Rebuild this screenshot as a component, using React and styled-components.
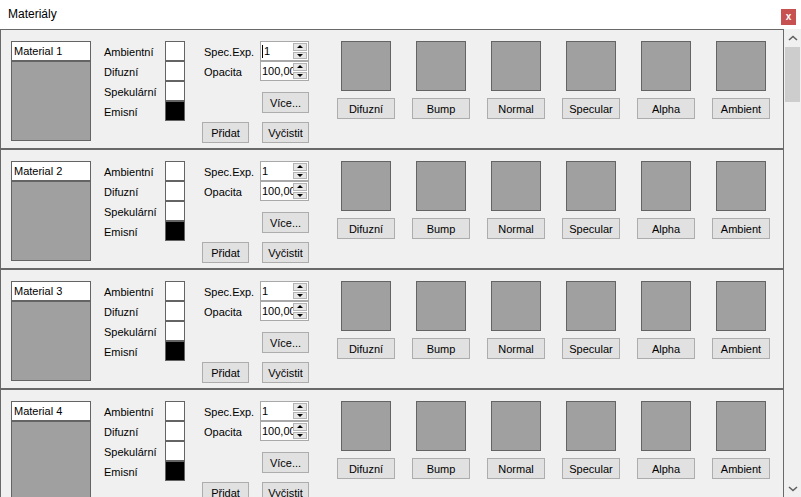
import React from "react";
import styled, { createGlobalStyle } from "styled-components";

const Global = createGlobalStyle`
  html, body { margin: 0; padding: 0; overflow: hidden; background: #ffffff; }
  body { font-family: "Liberation Sans", Arial, sans-serif; color: #000; }
  * { box-sizing: border-box; }
`;

const Window = styled.div`
  display: flex;
  flex-direction: column;
  height: 100vh;
  width: 801px;
`;

const TitleBar = styled.div`
  height: 29px;
  flex: none;
  display: flex;
  justify-content: space-between;
  align-items: flex-start;
  background: #ffffff;
`;

const Title = styled.span`
  font-size: 12px;
  line-height: 29px;
  padding-left: 8px;
`;

const CloseButton = styled.div`
  margin-top: 9px;
  margin-right: 5px;
  width: 15px;
  height: 16px;
  background: #c75050;
  color: #fff;
  font-size: 10px;
  font-weight: bold;
  line-height: 15px;
  text-align: center;
`;

const Body = styled.div`
  flex: 1;
  min-height: 0;
  display: flex;
  background: #f0f0f0;
`;

const List = styled.div`
  width: 784px;
  overflow: hidden;
`;

const Panel = styled.div`
  height: 120px;
  border: 1px solid #696969;
  padding: 11px 0 0 10px;
  display: flex;
  align-items: flex-start;
  background: #f0f0f0;
`;

const NameColumn = styled.div`
  width: 80px;
  display: flex;
  flex-direction: column;
`;

const NameBox = styled.div`
  height: 20px;
  border: 1px solid #646464;
  background: #fff;
  font-size: 11px;
  line-height: 18px;
  padding-left: 2px;
`;

const Preview = styled.div`
  height: 80px;
  border: 1px solid #646464;
  background: #a0a0a0;
`;

const LabelColumn = styled.div`
  margin-left: 13px;
  width: 61px;
  display: flex;
  flex-direction: column;
`;

const Label = styled.div`
  height: 20px;
  line-height: 22px;
  font-size: 11px;
  white-space: nowrap;
`;

const SwatchColumn = styled.div`
  width: 20px;
  display: flex;
  flex-direction: column;
`;

const Swatch = styled.div`
  height: 20px;
  border: 1px solid #646464;
  background: ${(p) => p.$color};
`;

const ControlColumn = styled.div`
  width: ${(p) => p.$width}px;
  margin-left: ${(p) => p.$offset}px;
  display: flex;
  flex-direction: column;
`;

const FieldLabel = styled(Label)`
  padding-left: 2px;
`;

const Button = styled.div`
  width: 47px;
  height: 21px;
  margin-top: ${(p) => p.$top || 0}px;
  margin-left: ${(p) => p.$left || 0}px;
  background: #e1e1e1;
  border: 1px solid #adadad;
  font-size: 11px;
  line-height: 19px;
  padding-top: 1px;
  text-align: center;
  white-space: nowrap;
`;

const Spinner = styled.div`
  width: 49px;
  height: 20px;
  border: 1px solid #a9a9a9;
  background: #fff;
  display: flex;
`;

const SpinText = styled.div`
  flex: 1;
  overflow: hidden;
  white-space: nowrap;
  font-size: 11px;
  line-height: 18px;
  padding-left: 1px;
  display: flex;
  align-items: center;
`;

const Caret = styled.span`
  display: inline-block;
  width: 1px;
  height: 13px;
  background: #000;
  margin-right: 1px;
`;

const SpinButtons = styled.div`
  width: 14px;
  margin: 1px 1px 1px 0;
  display: flex;
  flex-direction: column;
  gap: 1px;
`;

const SpinButton = styled.div`
  flex: 1;
  background: #e6e6e6;
  border: 1px solid #b4b4b4;
  display: flex;
  align-items: center;
  justify-content: center;
`;

const Arrow = styled.div`
  width: 0;
  height: 0;
  border-left: 3px solid transparent;
  border-right: 3px solid transparent;
  ${(p) =>
    p.$up
      ? "border-bottom: 3px solid #000;"
      : "border-top: 3px solid #000;"}
`;

const Textures = styled.div`
  margin-left: 27px;
  display: flex;
  gap: 17px;
`;

const TextureSlot = styled.div`
  width: 58px;
  display: flex;
  flex-direction: column;
  align-items: center;
`;

const TextureSquare = styled.div`
  width: 50px;
  height: 50px;
  border: 1px solid #646464;
  background: #a0a0a0;
`;

const TextureButton = styled(Button)`
  width: 58px;
  margin-top: 7px;
`;

const Scrollbar = styled.div`
  width: 17px;
  display: flex;
  flex-direction: column;
  background: #f0f0f0;
`;

const ScrollArrow = styled.div`
  height: 17px;
  flex: none;
  display: flex;
  align-items: center;
  justify-content: center;
`;

const Track = styled.div`
  flex: 1;
  padding: 1px 1px 0 1px;
`;

const Thumb = styled.div`
  height: 55px;
  background: #cdcdcd;
`;

function Chevron({ up }) {
  return (
    <svg width="10" height="6" viewBox="0 0 10 6">
      <polyline
        points={up ? "1,5 5,1.5 9,5" : "1,1 5,4.5 9,1"}
        fill="none"
        stroke="#606060"
        strokeWidth="1.6"
      />
    </svg>
  );
}

function NumberField({ value, focused }) {
  return (
    <Spinner>
      <SpinText>
        {focused && <Caret />}
        {value}
      </SpinText>
      <SpinButtons>
        <SpinButton>
          <Arrow $up />
        </SpinButton>
        <SpinButton>
          <Arrow />
        </SpinButton>
      </SpinButtons>
    </Spinner>
  );
}

const colorRows = [
  { label: "Ambientní", color: "#ffffff" },
  { label: "Difuzní", color: "#ffffff" },
  { label: "Spekulární", color: "#ffffff" },
  { label: "Emisní", color: "#000000" },
];

const textures = ["Difuzní", "Bump", "Normal", "Specular", "Alpha", "Ambient"];

function MaterialPanel({ index }) {
  return (
    <Panel>
      <NameColumn>
        <NameBox>Material {index}</NameBox>
        <Preview />
      </NameColumn>
      <LabelColumn>
        {colorRows.map((r) => (
          <Label key={r.label}>{r.label}</Label>
        ))}
      </LabelColumn>
      <SwatchColumn>
        {colorRows.map((r) => (
          <Swatch key={r.label} $color={r.color} />
        ))}
      </SwatchColumn>
      <ControlColumn $width={58} $offset={17}>
        <FieldLabel>Spec.Exp.</FieldLabel>
        <FieldLabel>Opacita</FieldLabel>
        <Button $top={41}>Přidat</Button>
      </ControlColumn>
      <ControlColumn $width={50} $offset={0}>
        <NumberField value="1" focused={index === 1} />
        <NumberField value="100,00" />
        <Button $top={11} $left={2}>Více...</Button>
        <Button $top={9} $left={2}>Vyčistit</Button>
      </ControlColumn>
      <Textures>
        {textures.map((t) => (
          <TextureSlot key={t}>
            <TextureSquare />
            <TextureButton>{t}</TextureButton>
          </TextureSlot>
        ))}
      </Textures>
    </Panel>
  );
}

export default function App() {
  return (
    <Window>
      <Global />
      <TitleBar>
        <Title>Materiály</Title>
        <CloseButton>x</CloseButton>
      </TitleBar>
      <Body>
        <List>
          {[1, 2, 3, 4].map((i) => (
            <MaterialPanel key={i} index={i} />
          ))}
        </List>
        <Scrollbar>
          <ScrollArrow>
            <Chevron up />
          </ScrollArrow>
          <Track>
            <Thumb />
          </Track>
          <ScrollArrow>
            <Chevron />
          </ScrollArrow>
        </Scrollbar>
      </Body>
    </Window>
  );
}
